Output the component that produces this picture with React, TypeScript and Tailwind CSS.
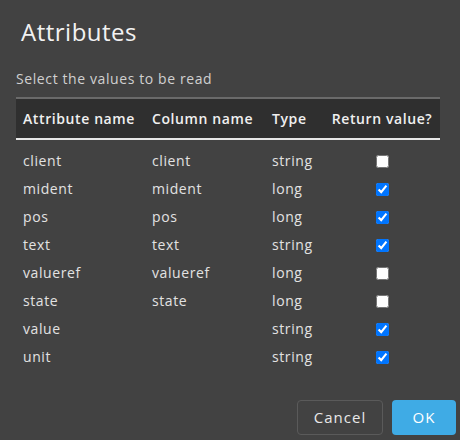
import React from 'react';

const rows = [
  { attr: 'client', col: 'client', type: 'string', ret: false },
  { attr: 'mident', col: 'mident', type: 'long', ret: true },
  { attr: 'pos', col: 'pos', type: 'long', ret: true },
  { attr: 'text', col: 'text', type: 'string', ret: true },
  { attr: 'valueref', col: 'valueref', type: 'long', ret: false },
  { attr: 'state', col: 'state', type: 'long', ret: false },
  { attr: 'value', col: '', type: 'string', ret: true },
  { attr: 'unit', col: '', type: 'string', ret: true },
];

const App: React.FC = () => {
  return (
    <div
      className="w-[460px] h-[440px] bg-[#424242] text-[#e2e2e2] flex flex-col overflow-hidden"
      style={{ fontFamily: '"Open Sans", "Noto Sans", sans-serif' }}
    >
      <h1 className="pl-[21px] pt-[14px] text-[24px] leading-[36px] text-[#f2f2f2] tracking-[0.5px]">Attributes</h1>

      <div className="px-4 pt-[19px]">
        <p className="text-[14px] leading-[20px] text-[#d0d0d0] tracking-[0.6px]">Select the values to be read</p>

        {/* Tabelle */}
        <table className="mt-[8px] w-[424px] border-collapse table-fixed text-[14px]">
          <colgroup>
            <col className="w-[129px]" />
            <col className="w-[120px]" />
            <col className="w-[59px]" />
            <col className="w-[116px]" />
          </colgroup>
          <thead>
            <tr className="bg-[#2f2f2f] border-t-2 border-t-[#6a6a6a] border-b-2 border-b-[#e6e6e6]">
              <th className="h-[41px] pl-[7px] text-left font-semibold text-[#f0f0f0] tracking-[0.6px]">Attribute name</th>
              <th className="pl-[7px] text-left font-semibold text-[#f0f0f0] tracking-[0.6px]">Column name</th>
              <th className="pl-[7px] text-left font-semibold text-[#f0f0f0] tracking-[0.6px]">Type</th>
              <th className="text-center font-semibold text-[#f0f0f0] tracking-[0.6px]">Return value?</th>
            </tr>
          </thead>
          <tbody>
            <tr><td colSpan={4} className="h-[7px] p-0"></td></tr>
            {rows.map((r) => (
              <tr key={r.attr} className="h-[28px]">
                <td className="pl-[7px] tracking-[0.6px]">{r.attr}</td>
                <td className="pl-[7px] tracking-[0.6px]">{r.col}</td>
                <td className="pl-[7px] tracking-[0.6px]">{r.type}</td>
                <td className="text-center">
                  <input type="checkbox" defaultChecked={r.ret} className="w-[13px] h-[13px] align-middle" />
                </td>
              </tr>
            ))}
          </tbody>
        </table>
      </div>

      <div className="mt-auto flex justify-end gap-[9px] pr-[4px] pb-[5px]">
        <button className="w-[86px] h-[35px] rounded-[4px] border border-[#5a5a5a] text-[15px] text-[#e8e8e8] tracking-[1px]">
          Cancel
        </button>
        <button className="w-[64px] h-[35px] rounded-[4px] bg-[#3fabe5] text-[15px] text-white tracking-[1px]">
          OK
        </button>
      </div>
    </div>
  );
};

export default App;
